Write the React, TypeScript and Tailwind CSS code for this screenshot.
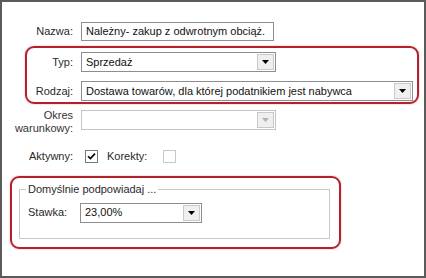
import React from "react";

const font = { fontFamily: '"Liberation Sans", Arial, sans-serif' };

function Arrow({ disabled }: { disabled?: boolean }) {
  return (
    <svg width="7" height="4" viewBox="0 0 7 4">
      <path d="M0 0H7L3.5 4Z" fill={disabled ? "#b0b0b0" : "#000"} />
    </svg>
  );
}

function Combo({ text, w, disabled }: { text?: string; w: string; disabled?: boolean }) {
  return (
    <div
      className={`${w} h-[20px] flex items-stretch border ${
        disabled ? "border-[#c4c4c4]" : "border-[#8e8e8e]"
      } bg-white`}
    >
      <div className="flex-1 pl-[4px] flex items-center text-[11px] text-[#111] truncate">{text}</div>
      <div className="w-[17px] my-[1px] mr-[1px] flex items-center justify-center bg-[#efefef] border border-[#c9c9c9]">
        <Arrow disabled={disabled} />
      </div>
    </div>
  );
}

function Check({ checked, disabled }: { checked?: boolean; disabled?: boolean }) {
  return (
    <div
      className={`w-[13px] h-[13px] border bg-white flex items-center justify-center ${
        disabled ? "border-[#c8c8c8]" : "border-[#7a7a7a]"
      }`}
    >
      {checked && (
        <svg width="9" height="9" viewBox="0 0 9 9">
          <path d="M1 4.2L3.4 6.6L8 1.6" stroke="#000" strokeWidth="1.6" fill="none" />
        </svg>
      )}
    </div>
  );
}

export default function App() {
  return (
    <div
      className="w-[426px] h-[278px] bg-white border-2 border-[#5a5a5a] text-[11px] text-[#2a2a2a]"
      style={font}
    >
      {/* Nazwa */}
      <div className="flex items-center mt-[20px]">
        <div className="w-[71px] text-right">Nazwa:</div>
        <div className="ml-[8px] w-[193px] h-[19px] border border-[#8e8e8e] flex items-center pl-[4px] text-[#111]">
          Należny- zakup z odwrotnym obciąż.
        </div>
      </div>

      {/* red group 1 */}
      <div className="ml-[23px] mt-[5px] w-[394px] border-2 border-[#b3212d] rounded-[9px] pt-[4px] pb-[1px] shadow-[0_0_2px_rgba(180,30,40,0.4)]">
        <div className="flex items-center">
          <div className="w-[46px] text-right">Typ:</div>
          <div className="ml-[8px]">
            <Combo text="Sprzedaż" w="w-[195px]" />
          </div>
        </div>
        <div className="flex items-center mt-[9px]">
          <div className="w-[46px] text-right">Rodzaj:</div>
          <div className="ml-[8px]">
            <Combo text="Dostawa towarów, dla której podatnikiem jest nabywca" w="w-[332px]" />
          </div>
        </div>
      </div>

      {/* Okres */}
      <div className="flex items-start mt-[5px]">
        <div className="w-[71px] text-right leading-[13px] text-[#333]">
          Okres
          <br />
          warunkowy:
        </div>
        <div className="ml-[8px] mt-[1px]">
          <Combo w="w-[195px]" disabled />
        </div>
      </div>

      {/* Aktywny */}
      <div className="flex items-center mt-[13px]">
        <div className="w-[71px] text-right">Aktywny:</div>
        <div className="ml-[12px]">
          <Check checked />
        </div>
        <div className="ml-[9px]">Korekty:</div>
        <div className="ml-[16px]">
          <Check disabled />
        </div>
      </div>

      {/* red group 2 */}
      <div className="ml-[8px] mt-[11px] w-[331px] h-[73px] border-2 border-[#b3212d] rounded-[9px] px-[7px] pt-[11px] shadow-[0_0_2px_rgba(180,30,40,0.4)]">
        <div className="relative w-[311px] h-[50px] border border-[#c8c8c8]">
          <div className="absolute -top-[7px] left-[6px] bg-white px-[2px] leading-[13px]">
            Domyślnie podpowiadaj ...
          </div>
          <div className="flex items-center mt-[13px]">
            <div className="w-[52px] pl-[8px]">Stawka:</div>
            <div className="ml-[8px]">
              <Combo text="23,00%" w="w-[122px]" />
            </div>
          </div>
        </div>
      </div>
    </div>
  );
}
